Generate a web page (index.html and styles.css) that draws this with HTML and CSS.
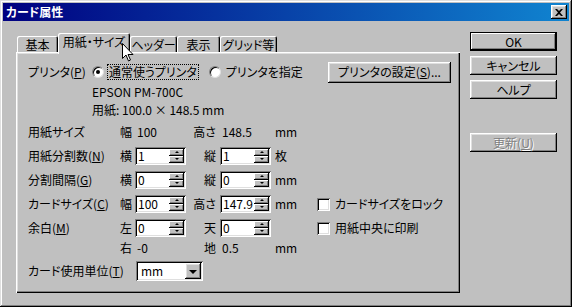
FILE: index.html
```html
<!DOCTYPE html>
<html lang="ja">
<head>
    <meta charset="UTF-8">
    <title>カード属性</title>
    <link rel="stylesheet" href="styles.css">
</head>
<body>
    <div class="window">
        <div class="titlebar">
            <span class="title">カード属性</span>
            <span class="close-btn">
                <svg width="8" height="7" viewBox="0 0 8 7"><path d="M0 0h2l2 2 2-2h2L5 3.5 8 7H6L4 5 2 7H0l3-3.5z" fill="#000"/></svg>
            </span>
        </div>

        <div class="client">
            <div class="sheet">
                <div class="tabs">
                    <div class="tab tab-basic">基本</div>
                    <div class="tab tab-paper active">
                        用紙・サイズ
                        <svg class="cursor" width="12" height="19" viewBox="0 0 12 19">
                            <path d="M0.5 0.5v15l3.5-3.5 2.5 6 2-1-2.5-5.5h5z" fill="#fff" stroke="#000" stroke-width="1"/>
                        </svg>
                    </div>
                    <div class="tab tab-header">ヘッダー</div>
                    <div class="tab tab-view">表示</div>
                    <div class="tab tab-grid">グリッド等</div>
                </div>

                <div class="panel">
                    <div class="printer-row">
                        <span class="label-printer">プリンタ(<u>P</u>)</span>
                        <span class="radio checked"></span>
                        <span class="radio-text focused">通常使うプリンタ</span>
                        <span class="radio radio-second"></span>
                        <span class="radio-text">プリンタを指定</span>
                        <span class="btn btn-setup">プリンタの設定(<u>S</u>)...</span>
                    </div>
                    <div class="info">EPSON PM-700C</div>
                    <div class="info">用紙: 100.0 × 148.5 mm</div>

                    <div class="form">
                        <span>用紙サイズ</span>
                        <span>幅</span>
                        <span class="value">100</span>
                        <span class="axis2">高さ</span>
                        <span class="value">148.5</span>
                        <span class="unit">mm</span>
                        <span></span>

                        <span>用紙分割数(<u>N</u>)</span>
                        <span>横</span>
                        <span class="spin"><span class="spin-val">1</span><span class="spin-btns"><span class="up"></span><span class="down"></span></span></span>
                        <span class="axis2">縦</span>
                        <span class="spin"><span class="spin-val">1</span><span class="spin-btns"><span class="up"></span><span class="down"></span></span></span>
                        <span class="unit">枚</span>
                        <span></span>

                        <span>分割間隔(<u>G</u>)</span>
                        <span>横</span>
                        <span class="spin"><span class="spin-val">0</span><span class="spin-btns"><span class="up"></span><span class="down"></span></span></span>
                        <span class="axis2">縦</span>
                        <span class="spin"><span class="spin-val">0</span><span class="spin-btns"><span class="up"></span><span class="down"></span></span></span>
                        <span class="unit">mm</span>
                        <span></span>

                        <span>カードサイズ(<u>C</u>)</span>
                        <span>幅</span>
                        <span class="spin"><span class="spin-val">100</span><span class="spin-btns"><span class="up"></span><span class="down"></span></span></span>
                        <span class="axis2">高さ</span>
                        <span class="spin"><span class="spin-val">147.9</span><span class="spin-btns"><span class="up"></span><span class="down"></span></span></span>
                        <span class="unit">mm</span>
                        <span class="check-item"><span class="checkbox"></span>カードサイズをロック</span>

                        <span>余白(<u>M</u>)</span>
                        <span>左</span>
                        <span class="spin"><span class="spin-val">0</span><span class="spin-btns"><span class="up"></span><span class="down"></span></span></span>
                        <span class="axis2">天</span>
                        <span class="spin"><span class="spin-val">0</span><span class="spin-btns"><span class="up"></span><span class="down"></span></span></span>
                        <span class="unit"></span>
                        <span class="check-item"><span class="checkbox"></span>用紙中央に印刷</span>

                        <span></span>
                        <span>右</span>
                        <span class="value">-0</span>
                        <span class="axis2">地</span>
                        <span class="value">0.5</span>
                        <span class="unit">mm</span>
                        <span></span>
                    </div>

                    <div class="unit-row">
                        <span class="label-unit">カード使用単位(<u>T</u>)</span>
                        <span class="select">
                            <span class="select-val">mm</span>
                            <span class="select-btn"></span>
                        </span>
                    </div>
                </div>
            </div>

            <div class="side">
                <span class="btn side-btn default">OK</span>
                <span class="btn side-btn">キャンセル</span>
                <span class="btn side-btn">ヘルプ</span>
                <span class="btn side-btn disabled update">更新(<u>U</u>)</span>
            </div>
        </div>
    </div>
</body>
</html>
```

FILE: styles.css
```css
* {
    margin: 0;
    padding: 0;
    box-sizing: border-box;
}

body {
    background: #c0c0c0;
    font-family: "Noto Sans CJK JP", "Noto Sans", sans-serif;
    font-feature-settings: "palt";
    font-size: 12px;
    line-height: 14px;
    color: #000;
}

u {
    text-decoration: underline;
    text-underline-offset: 1px;
}

.window {
    width: 572px;
    height: 307px;
    padding: 3px;
    background: #c0c0c0;
    box-shadow: inset -1px -1px #000, inset 1px 1px #dfdfdf, inset -2px -2px #808080, inset 2px 2px #fff;
}

/* title bar */
.titlebar {
    height: 18px;
    display: flex;
    align-items: center;
    justify-content: space-between;
    padding: 0 2px 0 3px;
    background: linear-gradient(to right, #000080, #1084d0);
}

.title {
    color: #fff;
    font-weight: bold;
    font-size: 12px;
}

.close-btn {
    width: 16px;
    height: 14px;
    display: flex;
    align-items: center;
    justify-content: center;
    background: #c0c0c0;
    box-shadow: inset -1px -1px #000, inset 1px 1px #fff, inset -2px -2px #808080, inset 2px 2px #dfdfdf;
}

/* body */
.client {
    display: flex;
    padding: 12px 0 0 13px;
}

.sheet {
    width: 444px;
}

.tabs {
    display: flex;
    align-items: flex-end;
    height: 19px;
    padding-left: 1px;
}

.tab {
    height: 16px;
    display: flex;
    align-items: center;
    justify-content: center;
    padding-top: 1px;
    border-radius: 2px 2px 0 0;
    box-shadow: inset 1px 1px #fff, inset -1px 0 #000, inset -2px 0 #808080;
    background: #c0c0c0;
}

.tab-basic { width: 41px; }
.tab-paper { width: 72px; }
.tab-header { width: 47px; }
.tab-view { width: 43px; }
.tab-grid { width: 57px; }

.tab.active {
    height: 21px;
    margin-bottom: -2px;
    padding-top: 0;
    padding-bottom: 4px;
    position: relative;
    z-index: 1;
}

.cursor {
    position: absolute;
    left: 64px;
    top: 10px;
}

.panel {
    height: 241px;
    padding: 9px 9px 0 12px;
    background: #c0c0c0;
    box-shadow: inset 1px 1px #fff, inset -1px -1px #000, inset -2px -2px #808080, inset 2px 2px #dfdfdf;
}

/* printer */
.printer-row {
    height: 22px;
    display: flex;
    align-items: center;
}

.label-printer {
    width: 64px;
}

.radio {
    width: 12px;
    height: 12px;
    border-radius: 50%;
    background: #fff;
    border: 1px solid;
    border-color: #808080 #dfdfdf #dfdfdf #808080;
    box-shadow: inset 1px 1px #000;
    display: flex;
    align-items: center;
    justify-content: center;
}

.radio.checked::after {
    content: "";
    width: 4px;
    height: 4px;
    border-radius: 50%;
    background: #000;
}

.radio-text {
    margin-left: 3px;
    padding: 0 1px;
    border: 1px dotted transparent;
}

.radio-text.focused {
    border-color: #000;
}

.radio-second {
    margin-left: 10px;
}

.btn {
    display: flex;
    align-items: center;
    justify-content: center;
    background: #c0c0c0;
    box-shadow: inset -1px -1px #000, inset 1px 1px #fff, inset -2px -2px #808080, inset 2px 2px #dfdfdf;
}

.btn-setup {
    margin-left: auto;
    width: 123px;
    height: 21px;
}

.info {
    height: 18px;
    display: flex;
    align-items: center;
    padding-left: 64px;
}

/* size grid */
.form {
    margin-top: 4px;
    display: grid;
    grid-template-columns: 92px 15px 51px 34px 51px 46px 1fr;
    grid-template-rows: 18px 24px 24px 24px 24px 20px;
    align-items: end;
}

.form > span {
    height: 18px;
    display: flex;
    align-items: center;
}

.value {
    padding-left: 2px;
}

.axis2 {
    justify-content: flex-end;
    padding-right: 4px;
}

.unit {
    padding-left: 4px;
}

.spin {
    width: 51px;
    height: 18px;
    padding: 2px;
    background: #fff;
    box-shadow: inset 1px 1px #808080, inset -1px -1px #fff, inset 2px 2px #000, inset -2px -2px #dfdfdf;
}

.spin-val {
    flex: 1;
    padding-left: 1px;
    line-height: 14px;
}

.spin-btns {
    width: 15px;
    height: 14px;
    display: flex;
    flex-direction: column;
}

.spin-btns span {
    flex: 1;
    display: flex;
    align-items: center;
    justify-content: center;
    background: #c0c0c0;
    box-shadow: inset -1px -1px #000, inset 1px 1px #fff, inset -2px -2px #808080;
}

.spin-btns .up::after {
    content: "";
    border-left: 2px solid transparent;
    border-right: 2px solid transparent;
    border-bottom: 2px solid #000;
    margin-bottom: 1px;
}

.spin-btns .down::after {
    content: "";
    border-left: 2px solid transparent;
    border-right: 2px solid transparent;
    border-top: 2px solid #000;
    margin-bottom: 1px;
}

.check-item {
    gap: 5px;
    margin-top: -6px;
}

.checkbox {
    width: 13px;
    height: 13px;
    background: #fff;
    box-shadow: inset 1px 1px #808080, inset -1px -1px #fff, inset 2px 2px #000, inset -2px -2px #dfdfdf;
}

/* unit select */
.unit-row {
    margin-top: 4px;
    height: 20px;
    display: flex;
    align-items: center;
}

.label-unit {
    width: 108px;
}

.select {
    width: 67px;
    height: 20px;
    padding: 2px;
    display: flex;
    align-items: center;
    background: #fff;
    box-shadow: inset 1px 1px #808080, inset -1px -1px #fff, inset 2px 2px #000, inset -2px -2px #dfdfdf;
}

.select-val {
    flex: 1;
    padding-left: 3px;
}

.select-btn {
    width: 16px;
    height: 16px;
    display: flex;
    align-items: center;
    justify-content: center;
    background: #c0c0c0;
    box-shadow: inset -1px -1px #000, inset 1px 1px #fff, inset -2px -2px #808080, inset 2px 2px #dfdfdf;
}

.select-btn::after {
    content: "";
    border-left: 4px solid transparent;
    border-right: 4px solid transparent;
    border-top: 4px solid #000;
    margin-top: 1px;
}

/* right column */
.side {
    margin: -1px 0 0 10px;
    width: 87px;
    display: flex;
    flex-direction: column;
    gap: 5px;
}

.side-btn {
    height: 19px;
}

.side-btn.default {
    box-shadow: inset 0 0 0 1px #000, inset -2px -2px #000, inset 2px 2px #fff, inset -3px -3px #808080;
}

.side-btn.update {
    margin-top: 29px;
}

.disabled {
    color: #808080;
    text-shadow: 1px 1px #fff;
}
```
